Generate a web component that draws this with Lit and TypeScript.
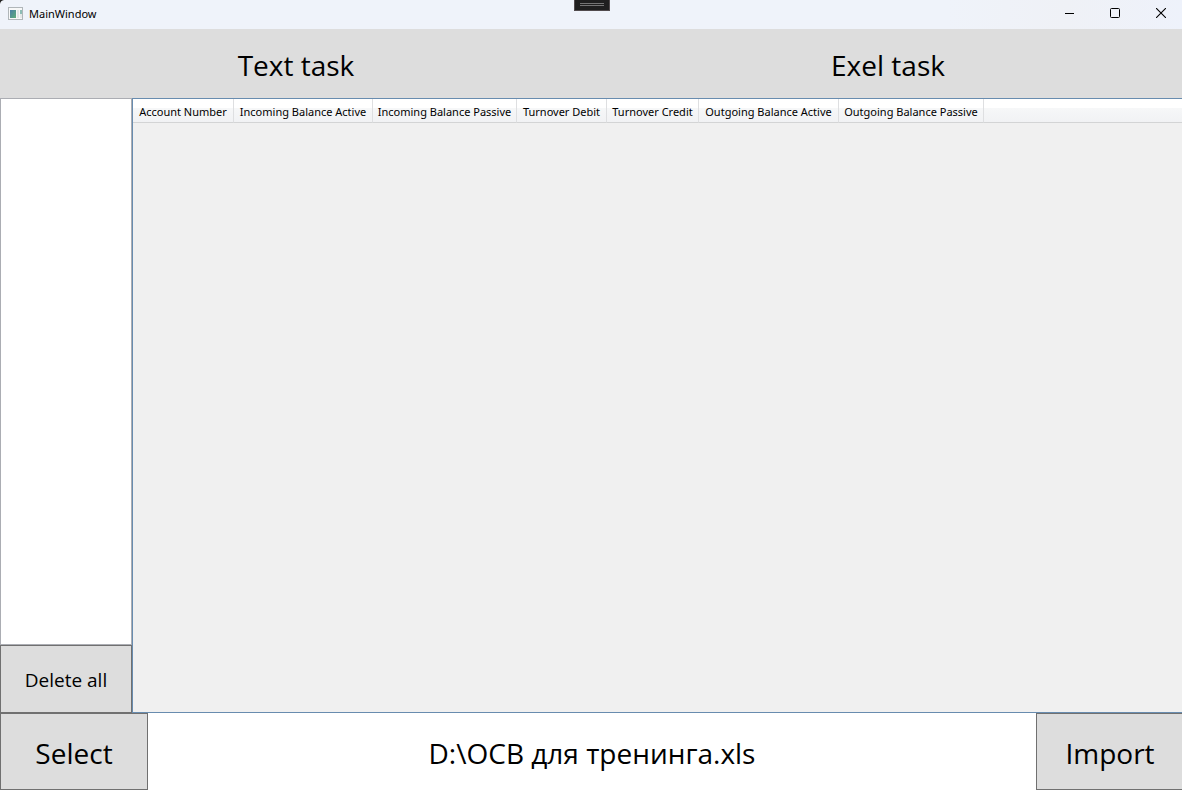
import { LitElement, html, css } from "lit";
import { customElement, property, state } from "lit/decorators.js";

interface Column {
  title: string;
  width: number;
}

const COLUMNS: Column[] = [
  { title: "Account Number", width: 101 },
  { title: "Incoming Balance Active", width: 139 },
  { title: "Incoming Balance Passive", width: 144 },
  { title: "Turnover Debit", width: 90 },
  { title: "Turnover Credit", width: 92 },
  { title: "Outgoing Balance Active", width: 140 },
  { title: "Outgoing Balance Passive", width: 145 },
];

@customElement("title-bar")
class TitleBar extends LitElement {
  @property() caption = "";

  static styles = css`
    :host {
      display: flex;
      align-items: center;
      height: 29px;
      background: linear-gradient(90deg, #eff3fa 0, #eff3fa 80%, #eff1f6 90%, #eef2fb 100%);
      position: relative;
    }
    .icon {
      display: block;
      margin: 0 5px 2px 8px;
    }
    .caption {
      flex: 1;
      font-family: "Noto Sans", sans-serif;
      font-size: 11px;
      line-height: 16px;
      padding-bottom: 1px;
    }
    .dock {
      position: absolute;
      top: 0;
      left: 50%;
      width: 36px;
      height: 11px;
      transform: translateX(-50%);
      box-sizing: border-box;
      padding: 3px 5px 0;
      border: 1px solid #514b4d;
      border-top: 0;
      background: #1f1f1f;
    }
    .dock i {
      display: block;
      height: 1px;
      margin-bottom: 1px;
      background: #747474;
    }
    .control {
      width: 46px;
      height: 29px;
      margin: 0;
      padding: 0 0 3px;
      border: 0;
      background: none;
      display: flex;
      align-items: center;
      justify-content: center;
    }
    .corner {
      position: absolute;
      top: 0;
      left: 0;
    }
  `;

  render() {
    return html`
      <svg class="icon" width="16" height="14" viewBox="0 0 16 14" aria-hidden="true">
        <defs>
          <linearGradient id="pane" x1="0" y1="0" x2="1" y2="1">
            <stop offset="0" stop-color="#4a7fa6" />
            <stop offset="1" stop-color="#5fae79" />
          </linearGradient>
        </defs>
        <rect x="0.5" y="0.5" width="14" height="12" fill="#f7f8f8" stroke="#b0b6b9" />
        <rect x="2" y="3" width="6" height="8" fill="url(#pane)" />
        <rect x="9" y="3" width="2" height="8" fill="#e2e5e6" />
        <rect x="12" y="3" width="2" height="4" fill="#8dbdb5" />
        <rect x="12" y="7" width="2" height="4" fill="#e6e9e9" />
      </svg>
      <span class="caption">${this.caption}</span>
      <div class="dock"><i></i><i></i></div>
      <button class="control" aria-label="Minimize">
        <svg width="10" height="10"><path d="M1 5.5H10.5" stroke="#000" /></svg>
      </button>
      <button class="control" aria-label="Maximize">
        <svg width="10" height="10">
          <rect x="0.5" y="0.5" width="9" height="9" rx="1" fill="none" stroke="#000" />
        </svg>
      </button>
      <button class="control" aria-label="Close">
        <svg width="10" height="10">
          <path d="M0 0L10 10M10 0L0 10" stroke="#000" stroke-width="1.1" />
        </svg>
      </button>
      <svg class="corner" width="4" height="4" aria-hidden="true">
        <path d="M0 0H4Q0.5 0.5 0 4Z" fill="#222" />
      </svg>
    `;
  }
}

@customElement("account-grid")
class AccountGrid extends LitElement {
  @property({ attribute: false }) columns: Column[] = [];

  static styles = css`
    :host {
      display: block;
      border: 1px solid #688caf;
      background: #f0f0f0;
      overflow: hidden;
    }
    table {
      width: 100%;
      table-layout: fixed;
      border-collapse: separate;
      border-spacing: 0;
    }
    th,
    td {
      box-sizing: border-box;
      height: 24px;
      padding: 2px 0 0;
      border-bottom: 1px solid #d3d4d5;
      background: linear-gradient(#ffffff 0, #ffffff 40%, #f6f7f8 41%, #f1f2f4 100%);
      font-family: "Noto Sans", sans-serif;
      font-size: 11px;
      line-height: 16px;
      font-weight: 400;
      text-align: center;
      white-space: nowrap;
    }
    th {
      border-right: 1px solid #dedfe1;
    }
  `;

  render() {
    return html`
      <table>
        <colgroup>
          ${this.columns.map((c) => html`<col style="width:${c.width}px" />`)}
          <col />
        </colgroup>
        <thead>
          <tr>
            ${this.columns.map((c) => html`<th scope="col">${c.title}</th>`)}
            <td></td>
          </tr>
        </thead>
      </table>
    `;
  }
}

@customElement("app-root")
class AppRoot extends LitElement {
  @state() private file = "D:\\ОСВ для тренинга.xls";

  static styles = css`
    :host {
      display: block;
      overflow: hidden;
      font-family: "Open Sans", "Noto Sans", sans-serif;
      color: #000;
    }
    .window {
      display: flex;
      flex-direction: column;
      height: 100vh;
      margin-right: -2px;
      background: #fff;
    }
    .tabs {
      display: grid;
      grid-template-columns: 1fr 1fr;
      height: 69px;
    }
    button {
      box-sizing: border-box;
      margin: 0;
      padding: 2px 0 0;
      border: 1px solid #707070;
      border-radius: 0;
      background: #dddddd;
      color: inherit;
      font-family: inherit;
      font-size: 28px;
      line-height: 40px;
    }
    .tabs button {
      border: 0;
    }
    .main {
      flex: 1;
      min-height: 0;
      display: grid;
      grid-template-columns: 132px 1fr;
    }
    .side {
      display: flex;
      flex-direction: column;
    }
    .files {
      flex: 1;
      margin: 0;
      padding: 0;
      border: 1px solid #abadb3;
      background: #fff;
    }
    .side button {
      height: 68px;
      font-size: 19px;
    }
    .footer {
      display: grid;
      grid-template-columns: 148px 1fr 148px;
      height: 77px;
    }
    .path {
      display: flex;
      align-items: center;
      justify-content: center;
      padding-top: 2px;
      font-size: 28px;
      line-height: 40px;
    }
  `;

  render() {
    return html`
      <div class="window">
        <title-bar caption="MainWindow"></title-bar>
        <nav class="tabs">
          <button>Text task</button>
          <button>Exel task</button>
        </nav>
        <main class="main">
          <div class="side">
            <ul class="files"></ul>
            <button>Delete all</button>
          </div>
          <account-grid .columns=${COLUMNS}></account-grid>
        </main>
        <footer class="footer">
          <button>Select</button>
          <div class="path">${this.file}</div>
          <button>Import</button>
        </footer>
      </div>
    `;
  }
}
